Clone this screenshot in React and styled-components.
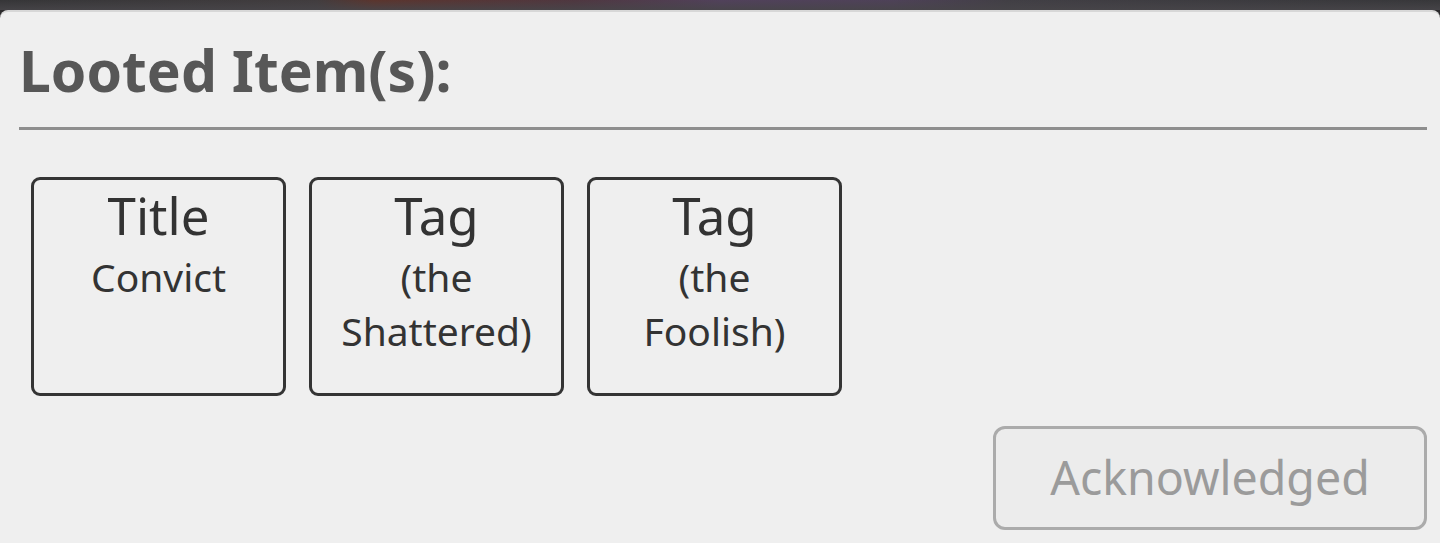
import React from 'react'
import styled, { createGlobalStyle } from 'styled-components'

const items = [
    { kind: 'Title', name: 'Convict' },
    { kind: 'Tag', name: '(the Shattered)' },
    { kind: 'Tag', name: '(the Foolish)' },
]

function App() {
  return (
    <>
      <GlobalStyle />
      <Page>
        <Backdrop />
        <Modal>
          <Heading>Looted Item(s):</Heading>
          <Divider />
          <ItemRow>
            {items.map((item, i) => (
              <ItemCard key={i}>
                <ItemKind>{item.kind}</ItemKind>
                <ItemName>{item.name}</ItemName>
              </ItemCard>
            ))}
          </ItemRow>
          <Footer>
            <AckButton disabled>Acknowledged</AckButton>
          </Footer>
        </Modal>
      </Page>
    </>
  )
}

const GlobalStyle = createGlobalStyle`
    html, body {
        margin: 0;
        padding: 0;
        background: #2b2a2c;
        font-family: "Noto Sans", "Open Sans", sans-serif;
        overflow: hidden;
    }
`;

const Page = styled.div`
    width: 1440px;
    height: 543px;
    display: flex;
    flex-direction: column;
`;

/* blurred game scene peeking out above the dialog */
const Backdrop = styled.div`
    height: 10px;
    flex-shrink: 0;
    background:
        linear-gradient(to bottom, rgba(30,30,32,0.2), rgba(70,68,72,0.9)),
        linear-gradient(to right, #3b3b3d 0%, #4a4446 22%, #6b3a30 26%, #5b3d48 40%, #5e4a6a 50%, #5a4a66 62%, #4a474e 70%, #3d3d40 100%);
`;

const Modal = styled.div`
    flex: 1;
    background: #efefef;
    border-top: 2px solid #d7d7d7;
    border-radius: 8px 8px 0 0;
    padding: 0 13px 0 19px;
    display: flex;
    flex-direction: column;
`;

const Heading = styled.h1`
    margin: 18px 0 0 0;
    font-size: 57px;
    font-weight: 700;
    line-height: 80px;
    color: #575757;
`;

const Divider = styled.div`
    height: 3px;
    background: #8e8e8e;
    margin-top: 17px;
`;

const ItemRow = styled.div`
    display: flex;
    gap: 23px;
    margin: 47px 0 0 12px;
`;

const ItemCard = styled.div`
    width: 217px;
    height: 213px;
    padding: 0 16px;
    border: 3px solid #343434;
    border-radius: 9px;
    display: flex;
    flex-direction: column;
    align-items: center;
    text-align: center;
    color: #333;
`;

const ItemKind = styled.div`
    font-size: 51px;
    line-height: 70px;
`;

const ItemName = styled.div`
    font-size: 39px;
    line-height: 54px;
`;

const Footer = styled.div`
    display: flex;
    justify-content: flex-end;
    margin-top: 30px;
`;

const AckButton = styled.button`
    width: 434px;
    height: 104px;
    border: 3px solid #ababab;
    border-radius: 12px;
    background: #ececec;
    color: #9b9b9b;
    font-family: "Noto Sans", "Open Sans", sans-serif;
    font-size: 46.5px;
    padding: 0 0 2px 0;
    cursor: default;
`;

export default App
